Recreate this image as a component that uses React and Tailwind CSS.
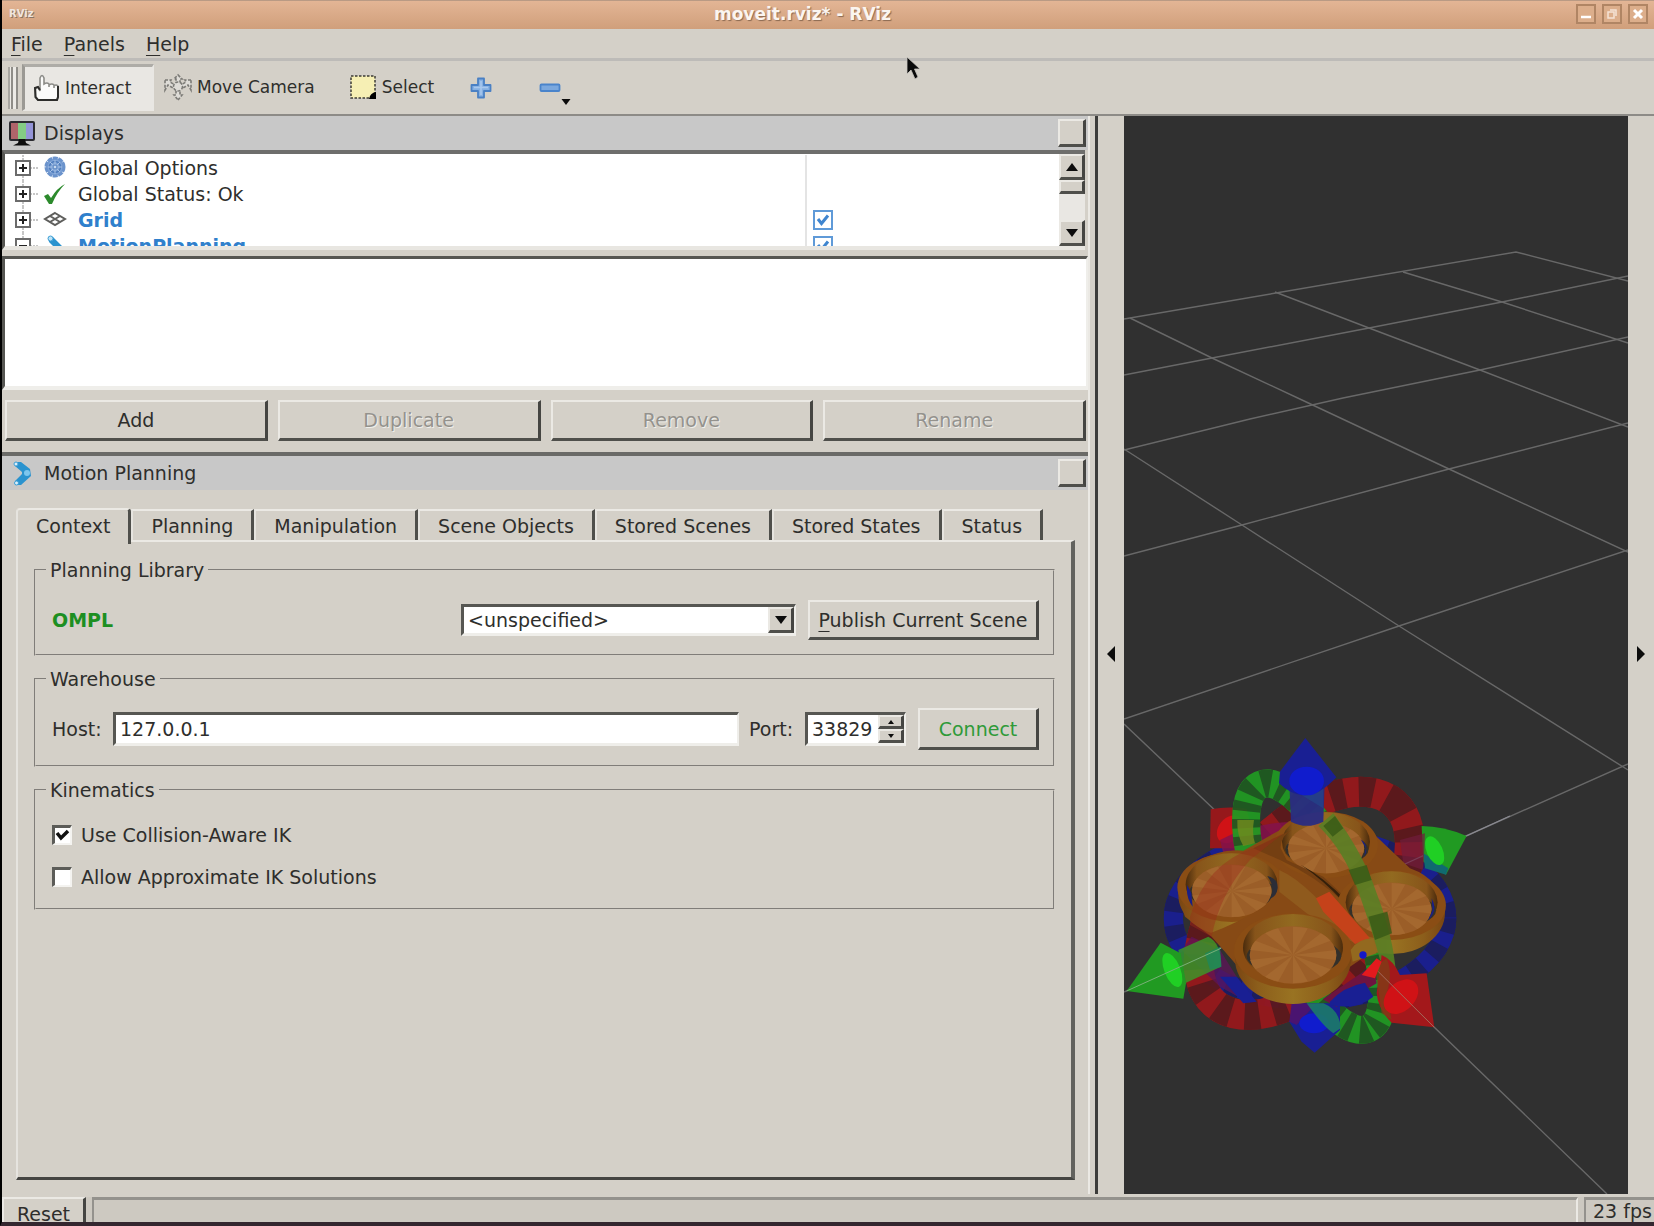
import React, { useState } from "react";

const raised =
  "border-t-2 border-l-2 border-r-3 border-b-3 border-t-[#ebe9e4] border-l-[#ebe9e4] border-r-[#454542] border-b-[#4f4f4b] bg-[#d4d0c8]";
const sunken =
  "border-t-3 border-l-3 border-r-2 border-b-3 border-t-[#565652] border-l-[#565652] border-r-[#efeeea] border-b-[#efeeea] bg-white";

/* ---------- icons ---------- */

const HandIcon = () => (
  <svg className="h-7 w-7 shrink-0" viewBox="0 0 28 28">
    <path
      d="M3.500 14 L3.500 23 L6 26 L25 26 L26 23 L26 12 Q24 10 22 12 L22 14 L22 11 Q20 9 17 11 L17 13 L17 10 Q15 8 12 10 L12 4 Q10 -1 8 4 L8 17 L6 13Z"
      fill="#fbfbfa"
      stroke="#8c8c88"
      strokeWidth="1.600"
    />
    <path d="M8 16 L6 13 L3 14 L3.500 23 L6 26 L25 26 L26 23 L26 12" fill="none" stroke="#2d2d2b" strokeWidth="2" />
  </svg>
);

const CameraMoveIcon = () => (
  <svg className="h-7 w-7 shrink-0" viewBox="0 0 28 28" fill="#dedcd7" stroke="#7b7a76" strokeWidth="1.600" strokeDasharray="3 1.500">
    <path d="M14 2 L18 6 L16 6 L16 10 L12 10 L12 6 L10 6Z" />
    <path d="M14 27 L18 22 L16 22 L16 17 L12 17 L12 22 L10 22Z" />
    <path d="M1 7 L7 7 L6 9 L11 12 L9 15 L4 12 L1 17Z" />
    <path d="M27 7 L21 7 L22 9 L17 12 L19 15 L24 12 L27 17Z" />
    <circle cx="14" cy="13.500" r="4.500" />
  </svg>
);

const SelectIcon = () => (
  <svg className="h-6 w-[26px] shrink-0" viewBox="0 0 26 24">
    <rect x="1" y="1" width="24" height="22" fill="#f6efb4" stroke="#3c3b36" strokeWidth="1.500" strokeDasharray="2.500 1.500" />
    <path d="M26 17 L26 24 L19 24 Q20 18 26 17Z" fill="#000" />
  </svg>
);

const PlusIcon = () => (
  <svg className="h-[22px] w-[22px]" viewBox="0 0 22 22">
    <path d="M8 1.500 H14 V8 H20.500 V14 H14 V20.500 H8 V14 H1.500 V8 H8Z" fill="#86b0e2" stroke="#4a80c4" strokeWidth="1.800" strokeLinejoin="round" />
    <path d="M11 4 V18 M4 10.500 H18" stroke="#a9c8ee" strokeWidth="1.500" />
  </svg>
);

const MinusIcon = () => (
  <svg className="h-[10px] w-[22px]" viewBox="0 0 22 10">
    <rect x="1.500" y="1.500" width="19" height="6.500" rx="1" fill="#7ba8de" stroke="#4a84cb" strokeWidth="1.800" />
  </svg>
);

const MonitorIcon = () => (
  <svg className="h-[27px] w-7 shrink-0" viewBox="0 0 28 27">
    <rect x="1" y="1" width="26" height="20" rx="2" fill="#2b2b30" />
    <rect x="3" y="3" width="7" height="16" fill="#b0646a" />
    <rect x="10" y="3" width="8" height="16" fill="#84cc84" />
    <rect x="18" y="3" width="7" height="16" fill="#9494d8" />
    <path d="M11 19 L17 19 L18 23 L23 25.500 L5 25.500 L10 23Z" fill="#0d0d0d" />
  </svg>
);

const ArmIcon = () => (
  <svg className="h-7 w-5 shrink-0" viewBox="0 0 20 28">
    <path d="M3 3 L9 3 L18 10 L19 17 L9 26 L3 26 L3 22 L10 15 L10 13 L3 7Z" fill="#2a93cf" />
    <circle cx="4" cy="5" r="2" fill="#d9eefa" stroke="#3fa0d6" />
    <circle cx="15" cy="14" r="3" fill="#7cc6ee" />
    <circle cx="4.500" cy="24" r="2" fill="#d9eefa" stroke="#3fa0d6" />
  </svg>
);

const GearIcon = () => (
  <svg className="h-6 w-6" viewBox="0 0 24 24">
    <circle cx="12" cy="11" r="9" fill="#7fa3d6" stroke="#6b93cc" strokeWidth="3" strokeDasharray="5 0.700" />
    <circle cx="12" cy="11" r="5.500" fill="none" stroke="#4f7dbd" strokeWidth="1.500" />
    <path d="M12 4 V18 M5 11 H19 M7 6 L17 16 M17 6 L7 16" stroke="#a9c3e6" strokeWidth="1" />
    <circle cx="12" cy="11" r="2" fill="#c7d9f0" stroke="#4f7dbd" />
  </svg>
);

const CheckIcon = () => (
  <svg className="h-6 w-6" viewBox="0 0 24 24">
    <path d="M1 14 L5 12 L8 16 Q14 6 22 2 Q14 10 9 22 L6 22Z" fill="#2c8a2c" />
  </svg>
);

const GridIcon = () => (
  <svg className="h-6 w-6" viewBox="0 0 24 24" fill="none" stroke="#5e5e5c" strokeWidth="2">
    <path d="M12 5 L22 11 L12 17 L2 11Z M7 8 L17 14 M17 8 L7 14" />
  </svg>
);

const ArmSmallIcon = () => (
  <svg className="h-6 w-6" viewBox="0 0 24 24">
    <path d="M5 3 L10 3 L20 13 L22 18 L12 24 L14 16 L6 8Z" fill="#2a93cf" />
    <circle cx="7.500" cy="4.500" r="2.500" fill="#bfe3f6" stroke="#3fa0d6" />
    <circle cx="17" cy="15" r="2.500" fill="#7cc6ee" />
  </svg>
);

const Triangle = ({ dir = "down", size = "h-2 w-3" }) => {
  const d = { down: "M0 0 H12 L6 8Z", up: "M0 8 H12 L6 0Z" }[dir];
  return (
    <svg className={size} viewBox="0 0 12 8">
      <path d={d} fill="#0c0c0c" />
    </svg>
  );
};

/* ---------- 3D view ---------- */

function Cup({ cx, cy, s, front = true }) {
  const wedges = Array.from({ length: 9 }, (_, i) => {
    const a = ((i * 40 + 70) * Math.PI) / 180;
    const b = a + Math.PI / 9;
    const rx = 130 * s;
    const ry = 85 * s;
    return `M${cx} ${cy} L${cx + rx * Math.cos(a)} ${cy + ry * Math.sin(a)} A${rx} ${ry} 0 0 1 ${cx + rx * Math.cos(b)} ${cy + ry * Math.sin(b)}Z`;
  }).join(" ");
  return (
    <g>
      {front && <ellipse cx={cx} cy={cy + 12 * s} rx={174 * s} ry={135 * s} fill="url(#cupWall)" />}
      <ellipse cx={cx} cy={cy - 12 * s} rx={177 * s} ry={113 * s} fill="#8a4d14" />
      <ellipse cx={cx} cy={cy - 22 * s} rx={150 * s} ry={101 * s} fill="url(#cupBack)" />
      <ellipse cx={cx + 3 * s} cy={cy + 4 * s} rx={142 * s} ry={58 * s} fill="#33302a" />
      <ellipse cx={cx} cy={cy} rx={130 * s} ry={86 * s} fill="#9b5e28" />
      <path d={wedges} fill="#a4682f" />
    </g>
  );
}

function Ring({ cx, cy, rx, ry, angle, width, light, dark, dash }) {
  const p = { cx, cy, rx, ry, fill: "none", strokeWidth: width };
  return (
    <g transform={`rotate(${angle} ${cx} ${cy})`}>
      <ellipse {...p} stroke={light} />
      <ellipse {...p} stroke={dark} strokeDasharray={dash} />
    </g>
  );
}

function Scene() {
  return (
    <svg className="absolute inset-0 h-full w-full" viewBox="1124 116 504 1078" preserveAspectRatio="xMidYMid slice" role="img" aria-label="3D view">
      <defs>
        <linearGradient id="cupWall" x1="0" x2="1" y1="0" y2="0">
          <stop offset="0" stopColor="#7a4512" />
          <stop offset="0.200" stopColor="#8c5e1b" />
          <stop offset="0.500" stopColor="#997322" />
          <stop offset="0.800" stopColor="#8c5e1b" />
          <stop offset="1" stopColor="#7a4512" />
        </linearGradient>
        <linearGradient id="cupBack" x1="0" x2="1" y1="0" y2="0">
          <stop offset="0" stopColor="#4a2b0c" />
          <stop offset="0.120" stopColor="#87541a" />
          <stop offset="0.500" stopColor="#926a20" />
          <stop offset="0.880" stopColor="#87541a" />
          <stop offset="1" stopColor="#4a2b0c" />
        </linearGradient>
      </defs>
      <g fill="none" stroke="#686868" strokeWidth="1.400">
        <path d="M1124 319 L1516 252 L1628 281" />
        <path d="M1124 375 L1212 358 L1369 328 L1502 302 L1628 276" />
        <path d="M1124 450 L1250 419 L1343 398 L1480 370 L1628 337" />
        <path d="M1124 556 L1242 525 L1449 469 L1628 423" />
        <path d="M1124 719 L1399 626 L1628 550" />
        <path d="M1124 992 L1466 836 L1628 764" />
        <path d="M1130 318 L1212 358 L1302 400 L1449 469 L1628 552" />
        <path d="M1275 292 L1369 328 L1480 370 L1628 427" />
        <path d="M1403 272 L1502 302 L1628 343" />
        <path d="M1124 449 L1242 525 L1399 626 L1628 770" />
        <path d="M1124 724 L1220 815 L1434 1027 L1607 1194" />
      </g>
      <g transform="translate(1110 720) scale(0.3333)">
        <g opacity="0.95">
          <Ring cx={600} cy={595} rx={410} ry={247} angle={0} width={58} light="#191f93" dark="#1a1c62" dash="42 40" />
        </g>
        <path d="M302 268 Q350 258 410 266 L430 350 L372 385 L300 385Z" fill="#96181b" />
        <ellipse cx="360" cy="328" rx="34" ry="46" transform="rotate(40 360 328)" fill="#d01216" />
        <g opacity="0.92">
          <Ring cx={583} cy={550} rx={404} ry={222} angle={-48} width={90} light="#9a181b" dark="#5f181b" dash="44 42" />
        </g>
        <path d="M330 360 Q420 310 550 305 L460 380 L340 400Z" fill="#82124f" opacity="0.8" />
        <path d="M245 650 L215 690 L330 800 L420 850 L380 770 L330 690Z" fill="#5d1458" opacity="0.75" />
        <path d="M330 770 L380 770 L440 845 L400 850Z" fill="#191f93" />
        <g opacity="0.92">
          <Ring cx={613} cy={560} rx={400} ry={136} angle={66} width={84} light="#209c22" dark="#1e5c20" dash="26 24" />
        </g>
        <path d="M382 300 L432 300 Q425 340 435 370 L400 378 Q380 345 382 300Z" fill="#6f8a1e" opacity="0.85" />
        <path d="M885 432 L1200 288" stroke="#8b8b93" strokeWidth="4" />
        <path d="M935 318 Q1000 318 1070 348 L1008 464 L940 425Z" fill="#219a22" />
        <path d="M940 400 L1015 445 L1008 464 L945 445Z" fill="#106a70" />
        <ellipse cx="974" cy="392" rx="24" ry="46" transform="rotate(-24 974 392)" fill="#20cf24" />
        <path d="M870 360 L945 340 L940 450 L880 430Z" fill="#701c3c" opacity="0.7" />

        <path d="M538 905 L560 850 L690 850 L690 930 L614 998 L575 965Z" fill="#191f93" />
        <path d="M545 850 L620 850 L560 915 L538 905Z" fill="#4a1470" />
        <ellipse cx="612" cy="910" rx="44" ry="30" fill="#101ccd" />
        <path d="M590 850 L640 850 Q690 870 692 925 L670 940 Q640 920 590 850Z" fill="#1c7a6a" opacity="0.9" />

        <path d="M510 330 Q560 285 650 282 Q760 285 800 350 L900 445 Q1000 480 1000 580 Q940 690 780 700 L720 740 L380 735 L305 650 L225 590 Q190 500 250 430 Q330 385 400 392Z" fill="#874a15" />
        <Cup cx={648} cy={385} s={0.88} front={false} />
        <path d="M430 385 L545 330 Q510 350 512 385 L530 420 L640 470 L720 545 L705 550 Q620 470 510 420Z" fill="#743f12" />
        <path d="M572 434 Q640 470 712 545 L700 545 Q640 480 572 434Z" fill="#34200a" />
        <Cup cx={365} cy={513} s={0.92} />
        <path d="M300 640 Q380 610 445 570 Q505 540 508 440 L640 600 L460 650 L380 735Z" fill="#874a15" />
        <path d="M508 450 Q600 490 735 670 L680 640 L590 580 L508 515Z" fill="#8f5a1d" />
        <Cup cx={845} cy={567} s={0.92} />
        <Cup cx={549} cy={705} s={1} />
        <path d="M618 535 L658 515 L780 655 L735 672 L640 575Z" fill="#c5421a" />
        <path d="M722 690 Q745 655 790 655 L800 700 L728 725Z" fill="#93691f" />
        <path d="M472 468 Q505 475 503 505 Q500 530 480 536 Q500 505 472 468Z" fill="#2b2d38" />
        <path d="M232 495 Q226 530 248 560 L244 520Z M965 535 Q985 570 955 600 L968 570Z M752 358 Q780 380 762 410 L768 385Z" fill="#1a1f86" />

        <path d="M625 318 L670 280 Q760 400 800 520 Q850 650 858 760 L810 720 Q790 640 740 500 Q700 390 625 318Z" fill="#588024" opacity="0.88" />
        <path d="M716 450 L770 435 L785 480 L735 495Z M775 590 L832 575 L846 640 L795 660Z M640 318 L675 288 L700 325 L668 350Z" fill="#3a5a16" opacity="0.85" />
        <path d="M240 590 Q290 430 430 385 L520 340 L420 420 Q330 520 305 650 L240 615Z" fill="#9a2a1a" opacity="0.42" />

        <path d="M638 838 L790 735 L800 790 L680 860Z" fill="#6e1440" />
        <path d="M660 845 Q700 800 765 788 L790 830 Q740 872 660 855Z" fill="#191f93" />
        <path d="M815 705 Q850 720 870 765 L950 760 L973 922 L845 908 Q805 870 800 820Z" fill="#a3181b" />
        <path d="M795 740 L830 715 Q850 760 830 820 L845 900 L815 880Z" fill="#7a4216" opacity="0.7" />
        <path d="M755 765 L800 715 L815 725 L795 775Z" fill="#e31a1e" />
        <ellipse cx="873" cy="830" rx="42" ry="60" transform="rotate(45 873 830)" fill="#d01216" />
        <path d="M805 755 L973 922" stroke="#a46a5c" strokeWidth="3" />
        <circle cx="759" cy="705" r="11" fill="#1418c8" />

        <path d="M205 690 L295 650 Q335 670 333 740 L225 790Z" fill="#3a9a2a" opacity="0.82" />
        <path d="M285 700 L330 680 L335 740 L300 750Z" fill="#138a6a" opacity="0.6" />
        <path d="M50 813 L152 668 L212 700 L228 790 L220 836Z" fill="#219a22" />
        <ellipse cx="187" cy="750" rx="24" ry="54" transform="rotate(-22 187 750)" fill="#20cf24" />
        <path d="M50 813 L333 685" stroke="#79b078" strokeWidth="3" />

        <path d="M538 190 L644 190 L640 305 Q590 330 543 305Z" fill="#2a2c82" opacity="0.95" />
        <path d="M538 200 Q590 235 640 265 L640 190Z" fill="#22468a" opacity="0.7" />
        <path d="M586 54 L679 172 Q590 270 507 190 L510 155Z" fill="#191f93" />
        <ellipse cx="590" cy="183" rx="52" ry="43" fill="#101ccd" />
      </g>
    </svg>
  );
}

/* ---------- left dock ---------- */

function DockHeader({ icon, title }) {
  return (
    <header className="flex h-[34px] shrink-0 items-center bg-[#c8c8c8] pr-[2px] pl-[6px]">
      <span className="flex w-[28px] justify-center">{icon}</span>
      <h2 className="ml-2 flex-1">{title}</h2>
      <button aria-label={`Close ${title}`} className={`h-7 w-7 ${raised}`} />
    </header>
  );
}

function TreeRow({ icon, label, bold, checkable, minus }) {
  return (
    <li className="flex h-[26px] shrink-0 items-center">
      <span className="flex h-[26px] w-[36px] items-center pl-[10px]">
        <svg className="h-[26px] w-[26px]" viewBox="0 0 26 26" fill="none">
          <path d="M8 0 V26 M15 13 H24" stroke="#b5b5b5" strokeDasharray="2 1" strokeWidth="1.500" />
          <rect x="1" y="6" width="14" height="14" fill="#fff" stroke="#6b6b6b" strokeWidth="2" />
          <path d={minus ? "M4 13 H12" : "M4 13 H12 M8 9 V17"} stroke="#222" strokeWidth="2" />
        </svg>
      </span>
      <span className="ml-[2px] w-6">{icon}</span>
      <span className={`ml-[11px] flex-1 ${bold ? "font-bold text-[#2f80cc]" : ""}`}>{label}</span>
      <span className="flex h-full w-[254px] items-center border-l-2 border-[#e4e4e4] pl-[6px]">
        {checkable && (
          <span className="relative flex">
            <input type="checkbox" defaultChecked aria-label={label} className="peer h-5 w-5 appearance-none border-2 border-[#5f9ad8] bg-white" />
            <svg className="pointer-events-none absolute inset-0 hidden h-5 w-5 peer-checked:block" viewBox="0 0 20 20">
              <path d="M5 9 L8.500 13.500 L15 5.500" fill="none" stroke="#3f85cf" strokeWidth="3" />
            </svg>
          </span>
        )}
      </span>
    </li>
  );
}

function ScrollBar() {
  return (
    <div className="flex w-[26px] shrink-0 flex-col bg-[#e9e7e3]">
      <button aria-label="Scroll up" className={`flex h-[26px] items-center justify-center ${raised}`}>
        <Triangle dir="up" />
      </button>
      <div className={`h-[14px] ${raised}`} />
      <div className="flex-1" />
      <button aria-label="Scroll down" className={`flex h-[26px] items-center justify-center ${raised}`}>
        <Triangle />
      </button>
    </div>
  );
}

function DisplaysPanel() {
  return (
    <section className="flex flex-col">
      <DockHeader icon={<MonitorIcon />} title="Displays" />
      <div className="mr-[3px] flex h-[100px] border-t-4 border-b-4 border-l-3 border-t-[#6e6e6c] border-b-[#e8e6e1] border-l-[#565652] bg-white">
        <ul className="flex min-w-0 flex-1 flex-col overflow-hidden pt-px">
          <TreeRow icon={<GearIcon />} label="Global Options" />
          <TreeRow icon={<CheckIcon />} label="Global Status: Ok" />
          <TreeRow icon={<GridIcon />} label="Grid" bold checkable />
          <TreeRow icon={<ArmSmallIcon />} label="MotionPlanning" bold checkable minus />
        </ul>
        <ScrollBar />
      </div>
      <div className={`mt-[6px] h-[134px] ${sunken} border-b-4`} />
      <div className="mt-[10px] grid grid-cols-4 gap-[10px] pr-[2px] pl-[3px]">
        <button className={`h-[41px] ${raised}`}>Add</button>
        {["Duplicate", "Remove", "Rename"].map((t) => (
          <button key={t} disabled className={`h-[41px] text-[#94928d] [text-shadow:1px_1px_0_#f0efeb] ${raised}`}>
            {t}
          </button>
        ))}
      </div>
    </section>
  );
}

const TABS = ["Context", "Planning", "Manipulation", "Scene Objects", "Stored Scenes", "Stored States", "Status"];

function TabBar({ active, onSelect }) {
  return (
    <div role="tablist" className="flex h-[34px] items-end">
      {TABS.map((t) => (
        <button
          key={t}
          role="tab"
          aria-selected={t === active}
          onClick={() => onSelect(t)}
          className={
            t === active
              ? "relative z-10 -mb-[4px] h-[36px] rounded-t-sm border-t-2 border-r-3 border-l-2 border-t-[#ebe9e4] border-r-[#4f4f4b] border-l-[#e6e4df] bg-[#d4d0c8] px-[18px] pb-[2px]"
              : "h-[31px] border-t-2 border-r-3 border-l-2 border-t-[#ebe9e4] border-r-[#4f4f4b] border-l-[#e6e4df] px-[18px]"
          }
        >
          {t}
        </button>
      ))}
    </div>
  );
}

function Group({ title, children }) {
  return (
    <fieldset className="mb-[11px] border-2 border-[#d4d0c8] px-4 [border-style:groove]">
      <legend className="-ml-[6px] px-1 leading-6">{title}</legend>
      {children}
    </fieldset>
  );
}

function CheckRow({ label, checked }) {
  return (
    <label className="flex h-6 items-center gap-[9px]">
      <span className="relative flex">
        <input type="checkbox" defaultChecked={checked} className="peer h-5 w-5 appearance-none border-t-3 border-r-2 border-b-2 border-l-3 border-t-[#5c5c58] border-r-[#f4f3f0] border-b-[#f4f3f0] border-l-[#5c5c58] bg-white" />
        <svg className="pointer-events-none absolute inset-0 hidden h-5 w-5 peer-checked:block" viewBox="0 0 20 20">
          <path d="M5 8 L9 13 L16 6" fill="none" stroke="#111" strokeWidth="3.500" />
        </svg>
      </span>
      {label}
    </label>
  );
}

function MotionPanel() {
  const [tab, setTab] = useState("Context");
  return (
    <section className="flex flex-1 flex-col">
      <DockHeader icon={<ArmIcon />} title="Motion Planning" />
      <div className="mt-[16px] mr-[13px] mb-[14px] ml-[14px] flex flex-1 flex-col">
        <TabBar active={tab} onSelect={setTab} />
        <div className="flex-1 border-t-2 border-r-4 border-b-3 border-l-2 border-t-[#ebe9e4] border-r-[#62625e] border-b-[#454542] border-l-[#e6e4df] px-4 pt-4">
          <Group title="Planning Library">
            <div className="flex items-center pt-[18px] pb-[14px]">
              <strong className="flex-1 text-[#1d8f22]">OMPL</strong>
              <div className={`relative flex h-8 w-[335px] ${sunken}`}>
                <select aria-label="Planner" className="w-full appearance-none bg-white pl-1 outline-none">
                  <option>&lt;unspecified&gt;</option>
                </select>
                <span className={`pointer-events-none absolute inset-y-0 right-0 flex w-[26px] items-center justify-center ${raised}`}>
                  <Triangle />
                </span>
              </div>
              <button className={`-mr-[2px] ml-3 h-10 w-[231px] whitespace-nowrap ${raised}`}>
                <span className="underline underline-offset-4">P</span>ublish Current Scene
              </button>
            </div>
          </Group>
          <Group title="Warehouse">
            <div className="flex items-center pt-[17px] pb-[15px]">
              <label htmlFor="host" className="w-[61px]">Host:</label>
              <input id="host" type="text" defaultValue="127.0.0.1" className={`h-[34px] min-w-0 flex-1 pl-1 outline-none ${sunken}`} />
              <label htmlFor="port" className="ml-[10px] w-[56px]">Port:</label>
              <div className={`flex h-[34px] w-[101px] ${sunken}`}>
                <input id="port" type="text" inputMode="numeric" defaultValue="33829" className="min-w-0 flex-1 pl-1 outline-none" />
                <span className="flex w-[26px] flex-col">
                  <button aria-label="Increase port" className={`flex flex-1 items-center justify-center ${raised}`}>
                    <Triangle dir="up" size="h-1 w-1.5" />
                  </button>
                  <button aria-label="Decrease port" className={`flex flex-1 items-center justify-center ${raised}`}>
                    <Triangle size="h-1 w-1.5" />
                  </button>
                </span>
              </div>
              <button className={`-mr-[2px] ml-3 h-[42px] w-[121px] text-[#2f9a38] ${raised}`}>Connect</button>
            </div>
          </Group>
          <Group title="Kinematics">
            <div className="flex flex-col gap-[18px] pt-[21px] pb-[19px]">
              <CheckRow label="Use Collision-Aware IK" checked />
              <CheckRow label="Allow Approximate IK Solutions" />
            </div>
          </Group>
        </div>
      </div>
    </section>
  );
}

/* ---------- window chrome ---------- */

function TitleBar() {
  const btn = "flex h-5 w-5 items-center justify-center border-2 border-[#b08564] bg-[#dcae8b]";
  return (
    <header className="flex h-[29px] items-center border-t border-[#b99a84] bg-gradient-to-b from-[#e3b595] to-[#d09f7b] pr-[6px] pb-[2px] pl-[7px]">
      <span className="w-[72px] text-[10px] font-bold text-[#efe6df] [text-shadow:1px_1px_0_#8a7464]">RViz</span>
      <h1 className="flex-1 pr-[52px] text-center text-[17px] leading-6 font-bold text-[#fbf5f0] [text-shadow:1px_1px_1px_#8b6a52]">moveit.rviz* - RViz</h1>
      <div className="flex gap-[6px]">
        <button aria-label="Minimize" className={btn}>
          <svg className="h-3 w-3" viewBox="0 0 12 12"><path d="M1 9 H11" stroke="#fff" strokeWidth="2.500" /></svg>
        </button>
        <button aria-label="Maximize" className={btn}>
          <svg className="h-3 w-3" viewBox="0 0 12 12"><path d="M2 4 H8 V10 H2Z M4 2 H10 V8" fill="none" stroke="#f5e3d6" strokeWidth="1.500" /></svg>
        </button>
        <button aria-label="Close" className={btn}>
          <svg className="h-3 w-3" viewBox="0 0 12 12"><path d="M2 2 L10 10 M10 2 L2 10" stroke="#fff" strokeWidth="3" /></svg>
        </button>
      </div>
    </header>
  );
}

function MenuBar() {
  return (
    <nav className="flex h-[32px] items-center gap-[21px] border-b-3 border-[#bdbbb8] pl-[9px]">
      {["File", "Panels", "Help"].map((m) => (
        <button key={m}>
          <span className="underline underline-offset-4">{m[0]}</span>
          {m.slice(1)}
        </button>
      ))}
    </nav>
  );
}

function ToolBar() {
  return (
    <div className="flex h-[55px] items-center border-b-2 border-[#8d8b87] pl-[6px] text-[17px]">
      <span className="h-[42px] w-[5px] border-r-2 border-l-2 border-r-[#8f8d88] border-l-[#a9a7a2] bg-[#eceae6]" />
      <span className="h-[42px] w-[5px] border-r-2 border-r-[#8f8d88] bg-[#eceae6]" />
      <button className="ml-[4px] flex h-[47px] w-[132px] items-center border-t-3 border-r-2 border-b-2 border-l-3 border-t-[#aeaca7] border-r-[#e9e7e3] border-b-[#e9e7e3] border-l-[#9b9994] bg-[#e9e7e3] pl-[7px]">
        <HandIcon />
        <span className="ml-[5px]">Interact</span>
      </button>
      <button className="ml-[10px] flex items-center pb-[2px]">
        <CameraMoveIcon />
        <span className="ml-[5px] whitespace-nowrap">Move Camera</span>
      </button>
      <button className="ml-[35px] flex items-center pb-[2px]">
        <SelectIcon />
        <span className="ml-[6px]">Select</span>
      </button>
      <button aria-label="Add tool" className="ml-[36px]">
        <PlusIcon />
      </button>
      <button aria-label="Remove tool" className="ml-[47px] flex h-8 items-center">
        <MinusIcon />
        <span className="mt-7">
          <Triangle size="h-1.5 w-2.5" />
        </span>
      </button>
    </div>
  );
}

function CollapseBar({ side, className }) {
  return (
    <button aria-label={`Toggle ${side} dock`} className={`flex shrink-0 items-center justify-center bg-[#d4d0c8] pb-[3px] ${className}`}>
      <svg className="h-4 w-2" viewBox="0 0 8 16">
        <path d={side === "left" ? "M8 0 V16 L0 8Z" : "M0 0 V16 L8 8Z"} fill="#0c0c0c" />
      </svg>
    </button>
  );
}

export default function App() {
  return (
    <div className="relative flex min-h-screen flex-col overflow-hidden border-b-4 border-l-2 border-b-[#34262f] border-l-black bg-[#d4d0c8] font-['DejaVu_Sans',sans-serif] text-[19px] leading-6 text-[#2e2e2c]">
      <TitleBar />
      <MenuBar />
      <ToolBar />
      <main className="flex flex-1">
        <div className="flex min-w-0 flex-[1086] flex-col">
          <DisplaysPanel />
          <div className="mt-[11px] h-[4px] bg-[#6a6a67]" />
          <MotionPanel />
        </div>
        <div className="w-[7px] shrink-0 border-l-2 border-[#ebe9e4]" />
        <div className="w-[3px] shrink-0 bg-[#3c3c3a]" />
        <CollapseBar side="left" className="w-[26px]" />
        <div className="relative min-w-0 flex-[504] bg-[#303030]">
          <Scene />
        </div>
        <CollapseBar side="right" className="w-[26px]" />
      </main>
      <footer className="mt-[3px] flex h-[25px] shrink-0 gap-[6px] overflow-hidden bg-[#cdc9c1]">
        <button className={`flex h-8 w-[84px] shrink-0 items-start justify-center leading-[30px] ${raised}`}>Reset</button>
        <div className="flex-1 border-t-3 border-r-2 border-l-2 border-t-[#94928d] border-r-[#ebe9e4] border-l-[#94928d]" />
        <div className="w-[70px] border-t-3 border-l-2 border-[#94928d] pl-[7px] leading-[22px] whitespace-nowrap">23 fps</div>
      </footer>
      <svg className="pointer-events-none absolute top-[56px] left-[904px] h-6 w-[15px]" viewBox="0 0 15 24">
        <path d="M1 1 L1 18 L5 14 L9 23 L12 21 L8.500 13 L14 13Z" fill="#0a0a0a" stroke="#c9c6c0" strokeWidth="0.800" />
      </svg>
    </div>
  );
}
